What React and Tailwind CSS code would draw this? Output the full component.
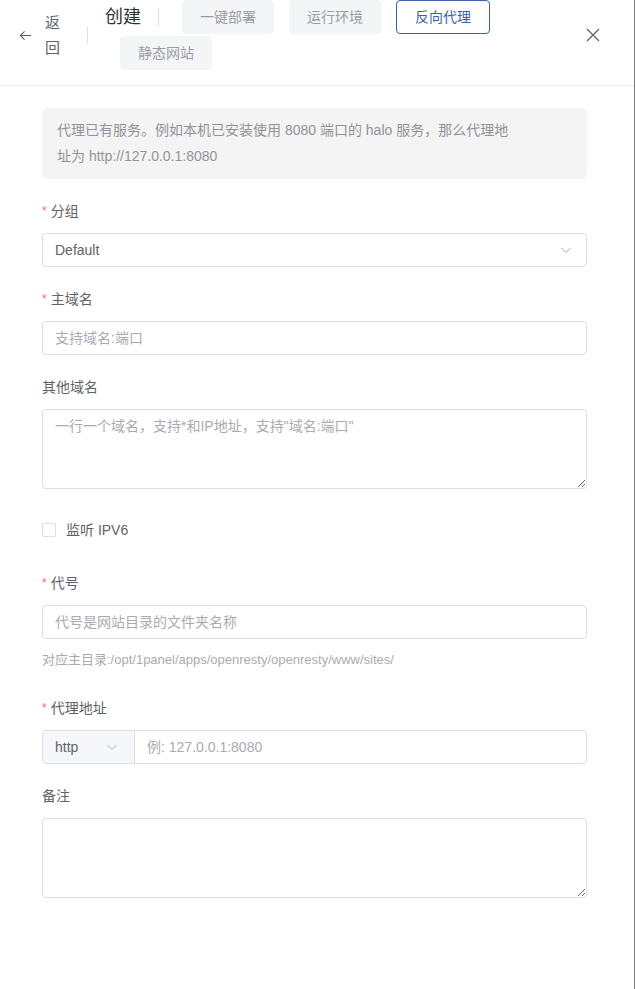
import React from "react";

const font = { fontFamily: '"Liberation Sans", "Noto Sans CJK SC", sans-serif' };

function Chevron({ className = "" }) {
  return (
    <svg className={className} width="12" height="12" viewBox="0 0 12 12" fill="none">
      <path d="M1.5 4 L6 8.5 L10.5 4" stroke="currentColor" strokeWidth="1" />
    </svg>
  );
}

function Label({ required, children }) {
  return (
    <div className="h-[22px] leading-[22px] mb-[11px] text-[14px] text-[#606266] flex items-center">
      {required && <span className="text-[#f56c6c] mr-[4px] text-[12px]">*</span>}
      <span>{children}</span>
    </div>
  );
}

export default function App() {
  return (
    <div className="w-[635px] h-[989px] bg-white relative overflow-hidden border-r border-[#777777]" style={font}>
      {/* header */}
      <div className="flex items-center h-[86px] pb-[15px] pl-[18px] pr-[33px] border-b border-[#ebeef5]">
        <div className="flex items-center text-[#606266]">
          <svg width="15" height="15" viewBox="0 0 16 16" fill="none" className="text-[#606266]">
            <path d="M14 8 H2.5 M7 3.5 L2.5 8 L7 12.5" stroke="currentColor" strokeWidth="1.2" />
          </svg>
          <span className="ml-[12px] w-[16px] text-[15px] leading-[25px] break-all">返回</span>
        </div>
        <div className="w-px h-[17px] bg-[#dcdfe6] ml-[26px]" />
        <div className="flex-1 ml-[17px] flex flex-wrap items-center gap-y-[2px] pr-[60px]">
          <span className="text-[18px] text-[#303133] leading-[34px] h-[34px]">创建</span>
          <div className="w-px h-[18px] bg-[#dcdfe6] ml-[17px] mr-[8px]" />
          {["一键部署", "运行环境"].map((t) => (
            <button key={t} className="ml-[15px] h-[34px] px-[17px] rounded-[4px] border border-[#f4f5f7] bg-[#f4f5f7] text-[14px] text-[#9a9da3]">
              {t}
            </button>
          ))}
          <button className="ml-[15px] h-[34px] px-[18px] rounded-[4px] border border-[#3d5fab] bg-white text-[14px] text-[#3d5fab]">
            反向代理
          </button>
          <button className="ml-[15px] h-[34px] px-[17px] rounded-[4px] border border-[#f4f5f7] bg-[#f4f5f7] text-[14px] text-[#9a9da3]">
            静态网站
          </button>
        </div>
        <svg width="16" height="16" viewBox="0 0 16 16" fill="none" className="text-[#606266]">
          <path d="M2 2 L14 14 M14 2 L2 14" stroke="currentColor" strokeWidth="1.3" />
        </svg>
      </div>

      {/* body */}
      <div className="pl-[42px] pr-[47px] pt-[22px]">
        <div className="bg-[#f4f4f5] rounded-[6px] pl-[15px] pr-[72px] pt-[9px] pb-[10px] text-[14px] leading-[26px] text-[#909399]">
          代理已有服务。例如本机已安装使用 8080 端口的 halo 服务，那么代理地址为 http://127.0.0.1:8080
        </div>

        <div className="mt-[21px]">
          <Label required>分组</Label>
          <div className="h-[34px] border border-[#dcdfe6] rounded-[4px] flex items-center justify-between pl-[12px] pr-[14px] text-[14px] text-[#606266]">
            <span>Default</span>
            <Chevron className="text-[#a8abb2]" />
          </div>
        </div>

        <div className="mt-[21px]">
          <Label required>主域名</Label>
          <input
            className="w-full h-[34px] border border-[#dcdfe6] rounded-[4px] px-[12px] text-[14px] text-[#606266] placeholder:text-[#a8abb2] outline-none"
            placeholder="支持域名:端口"
            style={font}
          />
        </div>

        <div className="mt-[21px]">
          <Label>其他域名</Label>
          <textarea
            className="block w-full h-[80px] border border-[#dcdfe6] rounded-[4px] px-[12px] py-[5px] leading-[22px] text-[14px] text-[#606266] placeholder:text-[#a8abb2] outline-none resize-y"
            placeholder={'一行一个域名，支持*和IP地址，支持"域名:端口"'}
            style={font}
          />
        </div>

        <div className="mt-[20px] h-[42px] flex items-center">
          <span className="w-[14px] h-[14px] border border-[#dcdfe6] rounded-[2px] bg-white" />
          <span className="ml-[10px] text-[14px] text-[#606266]">监听 IPV6</span>
        </div>

        <div className="mt-[21px]">
          <Label required>代号</Label>
          <input
            className="w-full h-[34px] border border-[#dcdfe6] rounded-[4px] px-[12px] text-[14px] text-[#606266] placeholder:text-[#a8abb2] outline-none"
            placeholder="代号是网站目录的文件夹名称"
            style={font}
          />
          <div className="mt-[11px] h-[20px] leading-[20px] text-[13px] text-[#a8abb2]">
            对应主目录:/opt/1panel/apps/openresty/openresty/www/sites/
          </div>
        </div>

        <div className="mt-[27px]">
          <Label required>代理地址</Label>
          <div className="h-[34px] border border-[#dcdfe6] rounded-[4px] flex text-[14px]">
            <div className="w-[92px] bg-[#f5f7fa] border-r border-[#dcdfe6] rounded-l-[4px] flex items-center justify-between pl-[12px] pr-[16px] text-[#606266]">
              <span>http</span>
              <Chevron className="text-[#a8abb2]" />
            </div>
            <input
              className="flex-1 px-[12px] text-[14px] text-[#606266] placeholder:text-[#a8abb2] outline-none rounded-r-[4px]"
              placeholder="例: 127.0.0.1:8080"
              style={font}
            />
          </div>
        </div>

        <div className="mt-[21px]">
          <Label>备注</Label>
          <textarea
            className="block w-full h-[80px] border border-[#dcdfe6] rounded-[4px] px-[12px] py-[5px] text-[14px] text-[#606266] outline-none resize-y"
            style={font}
          />
        </div>
      </div>
    </div>
  );
}
